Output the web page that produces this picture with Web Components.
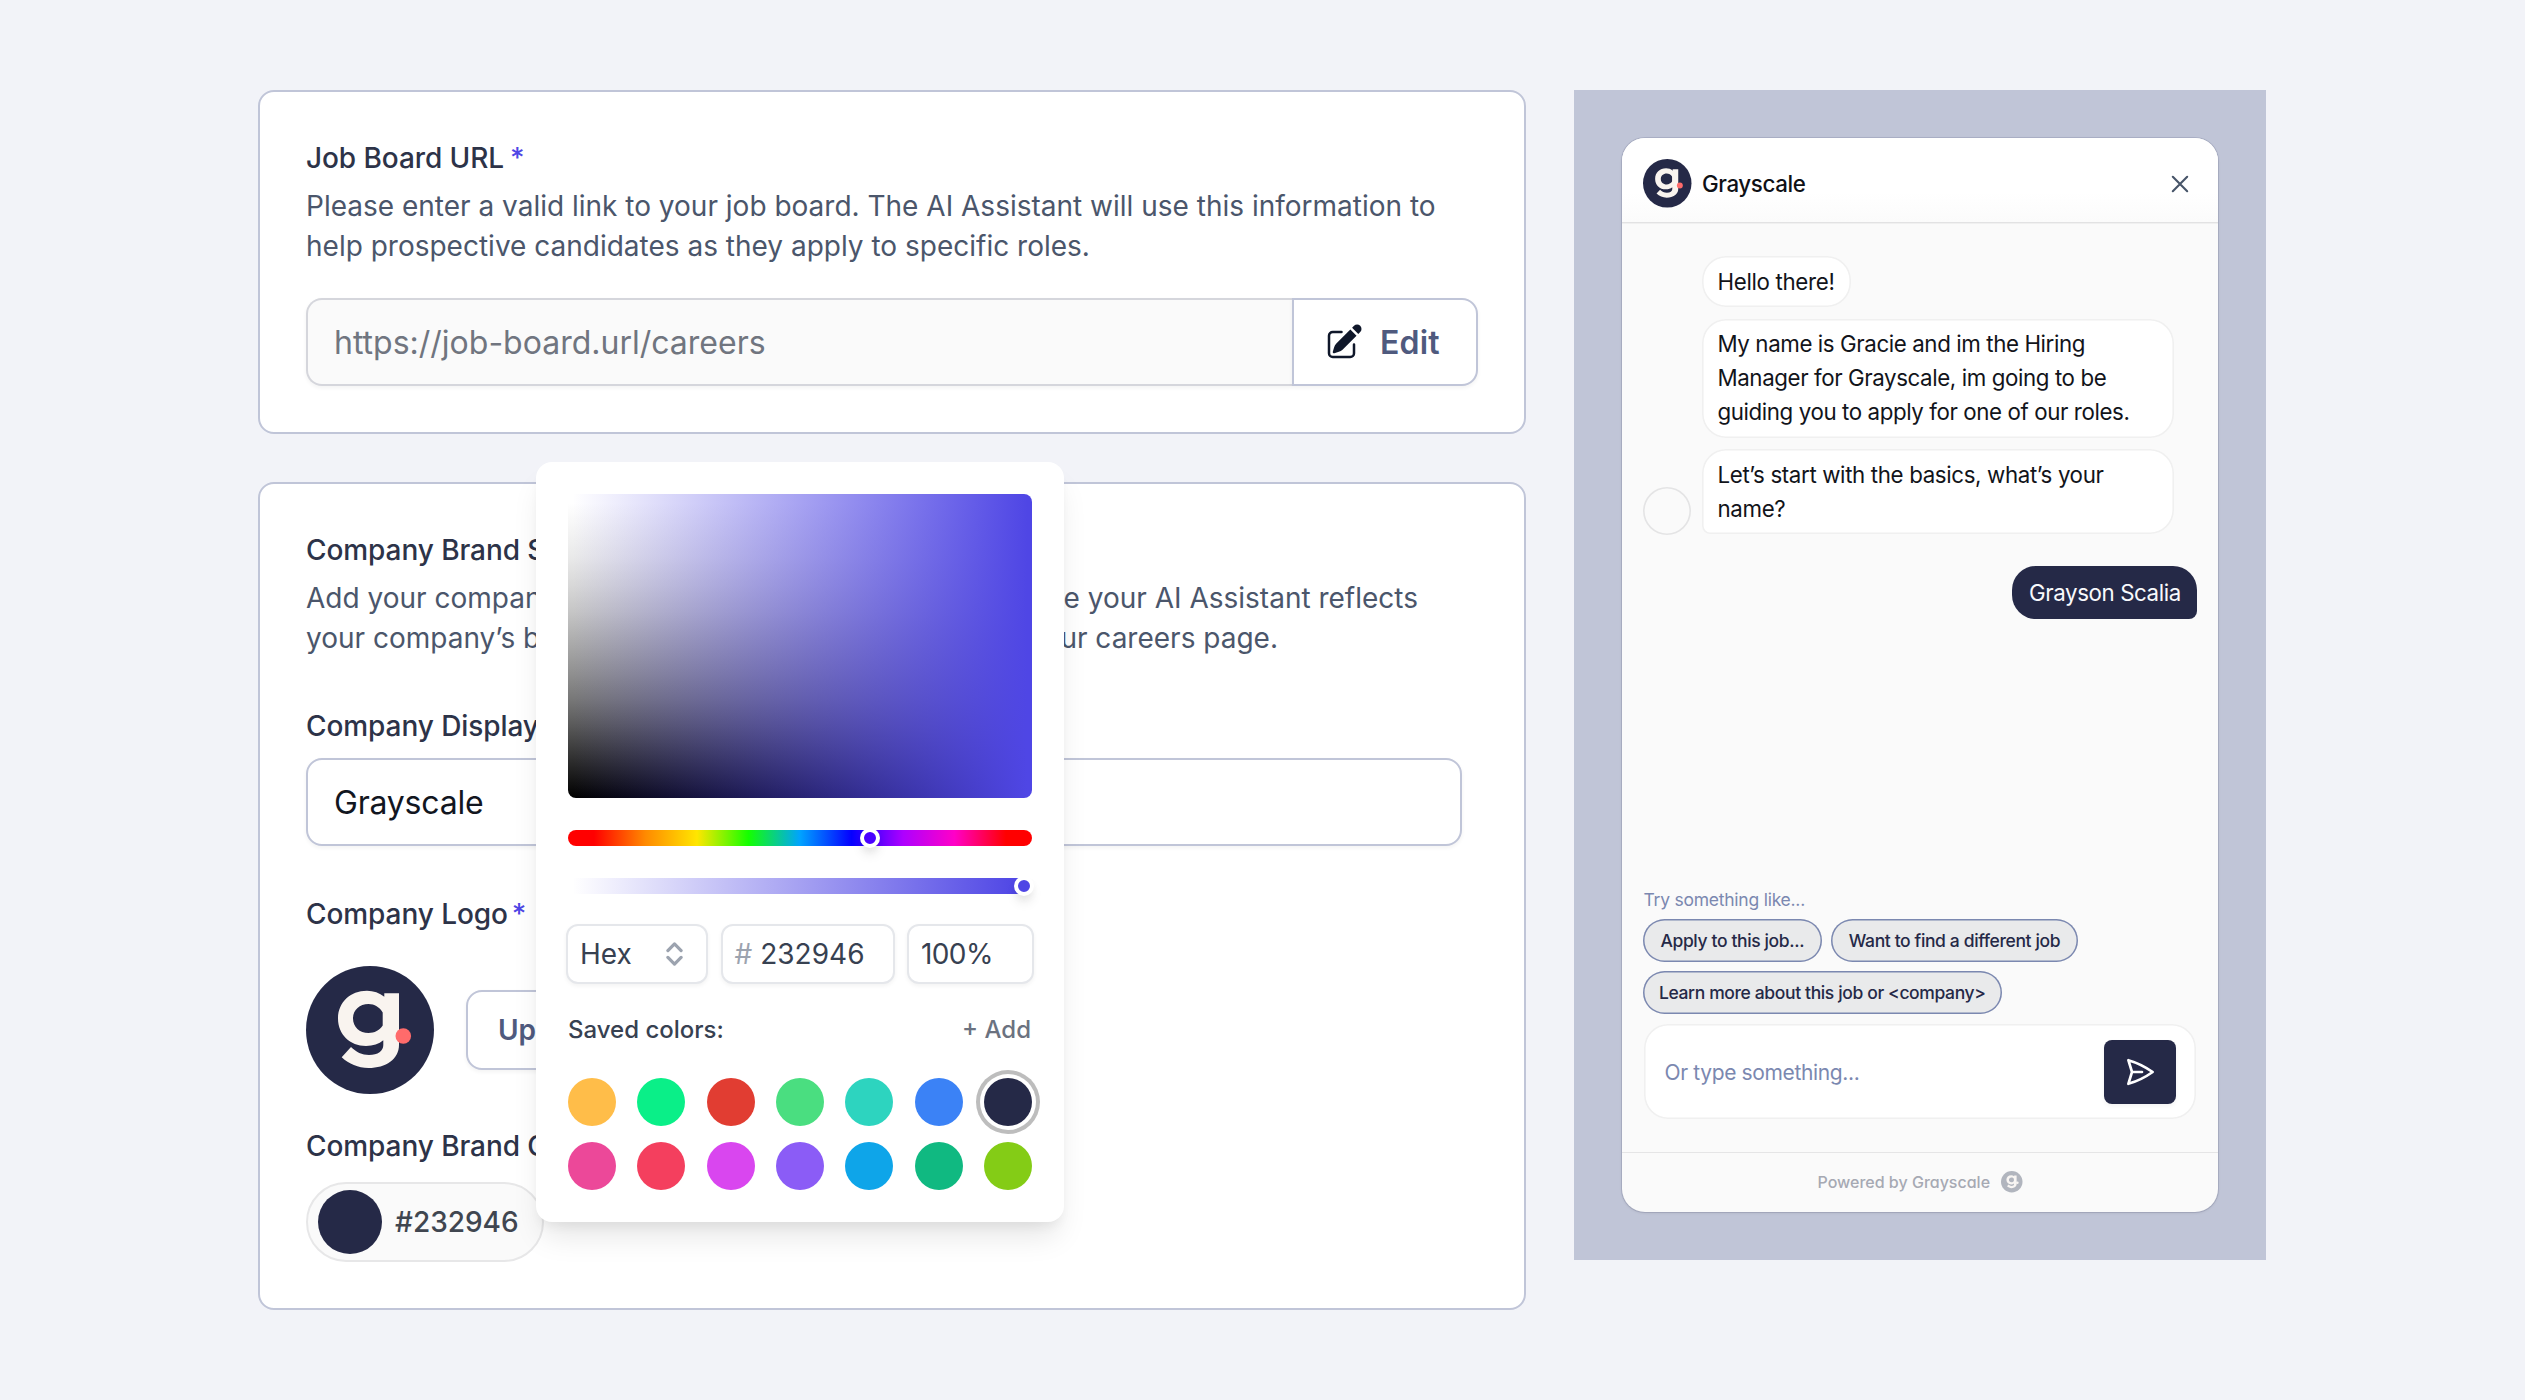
<!DOCTYPE html>
<html lang="en">
<head>
<meta charset="utf-8">
<title>Grayscale AI Assistant settings</title>
<style>
html,body{margin:0;height:100%}
body{background:#f2f3f8;font-family:Inter,"Liberation Sans",sans-serif;overflow:hidden}
</style>
</head>
<body>
<settings-page></settings-page>
<script>
const define = (name, css, html, setup) => {
  const tpl = document.createElement('template');
  tpl.innerHTML = `<style>:host,*{box-sizing:border-box}${css}</style>${html}`;
  customElements.define(name, class extends HTMLElement {
    connectedCallback() {
      if (this.shadowRoot) return;
      const root = this.attachShadow({ mode: 'open' });
      root.append(tpl.content.cloneNode(true));
      if (setup) setup(this, root);
    }
  });
};

/* Brand mark: set size with --size, colours with --disc / --mark / --dot */
define('brand-logo', `
:host{display:block;flex:none;width:var(--size,128px);height:var(--size,128px)}
svg{display:block;width:100%;height:100%}`, `
<svg viewBox="0 0 128 128">
<circle cx="64" cy="64" r="64" style="fill:var(--disc,#252947)"/>
<path fill-rule="evenodd" style="fill:var(--mark,#f9f4ef)" d="M93 27.3V79C93 93 80 102 62.5 102C52 102 43 98 35.7 91.3L45 81C50 86 56 89 63 89C72 89 77.3 85 77.3 79V74.3C73 78 67 80 60 80C44 80 32 68.5 32 52.5C32 36.5 44 24.7 61 24.7C67.5 24.7 73.5 26.7 78.3 30.7V27.3ZM76.7 46.5C73.5 41 68.5 38 62.5 38C53.5 38 47 44 47 52.5C47 61 53.5 67 62.5 67C68.5 67 73.5 64.3 76.7 59.5Z"/>
<circle cx="97.3" cy="70" r="7.8" style="fill:var(--dot,#ff6b6b)"/>
</svg>`);

define('field-label', `
:host{display:block;font-size:28px;line-height:40px;font-weight:500;color:#2d3348;letter-spacing:-.08px;white-space:nowrap}
span{color:#4f46e5;margin-left:var(--star-gap,4px)}`,
`<slot></slot>`, (el, root) => {
  if (el.hasAttribute('required')) {
    const s = document.createElement('span');
    s.textContent = '*';
    root.append(s);
  }
});

define('settings-card', `
:host{display:flex;flex-direction:column;position:relative;background:#fff;border:2px solid #c0c5d8;border-radius:16px;padding:46px}`,
`<slot></slot>`);

define('help-text', `
:host{display:block;margin-top:8px;font-size:28px;line-height:40px;color:#4b566b;white-space:nowrap}`,
`<slot></slot>`);

define('text-box', `
:host{display:flex;align-items:center;height:88px;padding:1px 26px 0;border:2px solid #c0c5d8;border-radius:16px;background:#fff;font-size:32px;line-height:40px;color:#12161f;box-shadow:0 2px 4px rgba(0,0,0,.05)}
:host([disabled]){background:#fafafa;border-color:#d5d6dc;border-right:0;border-radius:16px 0 0 16px;color:#70757f;flex:1}`,
`<slot></slot>`);

define('outline-button', `
:host{display:flex;align-items:center;gap:16px;height:80px;padding:0 30px;border:2px solid #c0c5d8;border-radius:16px;background:#fff;font-size:28px;font-weight:600;color:#4f5a7e;box-shadow:0 2px 4px rgba(0,0,0,.05)}
:host([joined]){height:88px;width:186px;border-radius:0 16px 16px 0;font-size:32px;letter-spacing:.2px}`,
`<slot name="icon"></slot><slot></slot>`);

define('color-pill', `
:host{display:flex;align-items:center;gap:13px;width:238px;height:80px;padding:0 10px;border:2px solid #e7e7e8;border-radius:40px;background:#fafafa;font-size:28px;font-weight:500;color:#404650}
i{width:64px;height:64px;border-radius:50%;background:#252947}`,
`<i></i><slot></slot>`);

define('color-slider', `
:host{display:block;position:relative;height:16px;border-radius:8px;flex:none}
:host([kind=hue]){background:linear-gradient(90deg,#f00 5.6%,#ff8a00 16.7%,#ffe600 27.8%,#14ff00 38.9%,#00a3ff 50%,#0500ff 61.1%,#ad00ff 72.2%,#ff00c7 83.3%,#f00 94.4%)}
:host([kind=alpha]){background:linear-gradient(90deg,rgba(79,70,229,0) 1%,#4f46e5 97%)}
i{position:absolute;top:-2px;left:var(--at);width:20px;height:20px;border-radius:50%;border:4px solid #fff;background:var(--knob);box-shadow:0 8px 12px -2px rgba(0,0,0,.1),0 4px 8px -2px rgba(0,0,0,.06)}`,
`<i></i>`);

define('mini-field', `
:host{display:flex;align-items:center;height:60px;border:2px solid #e5e7eb;border-radius:12px;background:#fff;padding:0 12px;font-size:28px;color:#374151;box-shadow:0 2px 4px rgba(0,0,0,.05)}
svg{display:block;margin-left:auto;margin-right:11px}`,
`<slot></slot>`, (el, root) => {
  if (el.hasAttribute('select')) root.innerHTML += `<svg width="17" height="24" viewBox="0 0 17 24" fill="none" stroke="#9ca3af" stroke-width="3.2" stroke-linecap="round" stroke-linejoin="round"><path d="M1.9 8.6L8.5 1.9L15.1 8.6M1.9 15.4L8.5 22.1L15.1 15.4"/></svg>`;
});

define('color-swatch', `
:host{display:block;width:48px;height:48px;border-radius:50%;background:var(--c)}
:host([selected]){box-shadow:0 0 0 4px #fff,0 0 0 8px #bdbdbd}`, ``);

define('color-picker', `
:host{position:absolute;left:276px;top:-22px;width:528px;height:760px;padding:32px;display:flex;flex-direction:column;background:#fff;border-radius:16px;box-shadow:0 20px 30px -6px rgba(0,0,0,.1),0 8px 12px -4px rgba(0,0,0,.06)}
.area{height:304px;border-radius:8px;margin-bottom:32px;background:
linear-gradient(90deg,rgba(79,70,229,0) 1%,#4f46e5 99%),
linear-gradient(180deg,#fff 3%,#e9e9e9 21%,#d8d8d8 30%,#c5c5c5 39%,#a8a8a8 50%,#909090 59%,#767676 68%,#5a5a5a 76%,#383838 85%,#161616 94%,#000 100%)}
.fields{display:flex;justify-content:space-between;margin:30px -2px 0}
.head{display:flex;justify-content:space-between;margin-top:30px;font-size:24px;line-height:32px;font-weight:500;color:#374151}
.add{color:#6b7280;padding-right:1px}
.hash{color:#9ca3af;margin-right:8px}
.grid{display:grid;grid-template-columns:repeat(7,48px);justify-content:space-between;row-gap:16px;margin-top:32px}`, `
<div class="area"></div>
<color-slider kind="hue" style="--at:292px;--knob:#4a00ff;margin-bottom:32px"></color-slider>
<color-slider kind="alpha" style="--at:446px;--knob:#4f46e5"></color-slider>
<div class="fields">
<mini-field select style="width:142px">Hex</mini-field>
<mini-field style="width:174px"><span class="hash">#</span><span>232946</span></mini-field>
<mini-field style="width:127px;letter-spacing:-.6px">100%</mini-field>
</div>
<div class="head"><span>Saved colors:</span><span class="add">+ Add</span></div>
<div class="grid"></div>`, (el, root) => {
  const g = root.querySelector('.grid');
  ['#ffbd49','#0aef88','#e13d32','#4ade80','#2dd4bf','#3b82f6','#252947','#ec4899','#f43f5e','#d946ef','#8b5cf6','#0ea5e9','#10b981','#84cc16'].forEach((c, i) => {
    const s = document.createElement('color-swatch');
    s.style.setProperty('--c', c);
    if (i === 6) s.setAttribute('selected', '');
    g.append(s);
  });
});

define('chat-bubble', `
:host{display:block;width:var(--w,472.5px);padding:8.5px 16px;border-radius:24px;background:#fff;box-shadow:inset 0 0 0 1.6px #f0f0f0;font-size:22.3px;line-height:34px;letter-spacing:-.4px;color:#12141a;white-space:nowrap}
:host([last]){border-bottom-left-radius:8px;letter-spacing:-.36px}
:host([mine]){align-self:flex-end;padding:10px 17px 8.6px;background:#252947;color:#f8f9fc;box-shadow:none;border-bottom-right-radius:8px}`,
`<slot></slot>`);

define('suggestion-chip', `
:host{display:flex;align-items:center;justify-content:center;height:43.3px;width:var(--w);border-radius:22px;background:#e9eaeb;box-shadow:inset 0 0 0 1.5px #7b88b0;font-size:17.5px;font-weight:500;letter-spacing:-.37px;color:#252947;white-space:nowrap}`,
`<slot></slot>`);

define('chat-widget', `
:host{display:flex;flex-direction:column;height:1074px;border-radius:23px;overflow:hidden;background:#fafafa;box-shadow:0 0 0 1px rgba(70,75,110,.16),0 1px 3px rgba(0,0,0,.1)}
header{display:flex;align-items:center;height:85px;padding:7px 29px 0 21px;background:linear-gradient(#fff 65%,#fbfbfb);border-bottom:1.6px solid #e2e2e3;box-shadow:0 1px 0 #f0f0f0}
header span{flex:1;margin-left:10.5px;font-size:22.3px;font-weight:500;letter-spacing:-.38px;color:#0f1116}
.log{flex:1;display:flex;flex-direction:column;padding:33px 21.5px 0 21px}
.turn{display:flex;align-items:flex-end;gap:10.5px}
.turn i{width:48px;height:48px;margin-bottom:-.5px;border-radius:50%;box-shadow:inset 0 0 0 1.6px #e4e4e5}
.stack{display:flex;flex-direction:column;gap:11.6px}
.compose{padding:0 22px 33px 20.5px;display:flex;flex-direction:column}
.hint{font-size:17.5px;line-height:24px;letter-spacing:-.24px;color:#7b88b0;padding-left:1px;margin-bottom:7px}
.chips{display:flex;flex-wrap:wrap;gap:8.7px 9px;margin-bottom:10px}
.box{display:flex;align-items:center;justify-content:space-between;height:95px;margin-left:1px;padding:0 20.5px 0 21px;border-radius:24px;background:#fff;box-shadow:inset 0 0 0 1.6px #f0f0f0;font-size:21px;letter-spacing:-.36px;color:#7b88b0}
.box span{padding-top:1.5px}
.send{display:flex;align-items:center;justify-content:center;width:72px;height:64px;border-radius:8px;background:#252947;box-shadow:0 2px 4px rgba(0,0,0,.05)}
footer{display:flex;align-items:center;justify-content:center;gap:11px;height:60px;border-top:1px solid #e5e5e6;font-size:16px;font-weight:500;font-feature-settings:"cv11";color:#a6a9b3;padding-bottom:1px}
`, `
<header><brand-logo style="--size:48.5px"></brand-logo><span>Grayscale</span>
<svg width="18" height="18" viewBox="0 0 18 18" fill="none" stroke="#475569" stroke-width="2.1" stroke-linecap="round"><path d="M1.8 1.8L16.2 16.2M16.2 1.8L1.8 16.2"/></svg></header>
<div class="log">
<div class="turn"><i></i><div class="stack">
<chat-bubble style="--w:149px;letter-spacing:-.33px">Hello there!</chat-bubble>
<chat-bubble>My name is Gracie and im the Hiring<br>Manager for Grayscale, im going to be<br>guiding you to apply for one of our roles.</chat-bubble>
<chat-bubble last>Let’s start with the basics, what’s your<br>name?</chat-bubble>
</div></div>
<chat-bubble mine style="--w:184.5px;margin-top:32px">Grayson Scalia</chat-bubble>
</div>
<div class="compose">
<div class="hint">Try something like...</div>
<div class="chips">
<suggestion-chip style="--w:179.5px">Apply to this job...</suggestion-chip>
<suggestion-chip style="--w:247px">Want to find a different job</suggestion-chip>
<suggestion-chip style="--w:359.5px">Learn more about this job or &lt;company&gt;</suggestion-chip>
</div>
<div class="box"><span>Or type something...</span><div class="send"><svg width="32" height="32" viewBox="0 0 24 24" fill="none" stroke="#fff" stroke-width="2" stroke-linecap="round" stroke-linejoin="round"><path d="M6 12L3.269 3.126A59.768 59.768 0 0121.485 12 59.77 59.77 0 013.27 20.876L5.999 12zm0 0h7.5"/></svg></div></div>
</div>
<footer><span>Powered by Grayscale</span><brand-logo style="--size:21.5px;--disc:#b1b5be;--mark:#f8f5f3;--dot:#f8f5f3"></brand-logo></footer>`);

define('settings-page', `
:host{display:flex;align-items:flex-start;gap:48px;padding:90px 0 0 258px;width:100%;height:1400px}
.forms{display:flex;flex-direction:column;gap:48px;width:1268px}
.preview{width:692px;height:1170px;padding:48px;background:#c0c5d7}
.join{display:flex;margin-top:32px}
.logo{display:flex;align-items:center;gap:32px;margin:32px 0}
.line{display:flex;justify-content:space-between}`, `
<div class="forms">
<settings-card>
<field-label required style="--star-gap:6px">Job Board URL</field-label>
<help-text>Please enter a valid link to your job board. The AI Assistant will use this information to<br>help prospective candidates as they apply to specific roles.</help-text>
<div class="join"><text-box disabled>https://job-board.url/careers</text-box>
<outline-button joined><svg slot="icon" width="40" height="40" viewBox="0 0 24 24" fill="#0f172a"><path d="M21.731 2.269a2.625 2.625 0 00-3.712 0l-1.157 1.157 3.712 3.712 1.157-1.157a2.625 2.625 0 000-3.712zM19.513 8.199l-3.712-3.712-8.4 8.4a5.25 5.25 0 00-1.32 2.214l-.8 2.685a.75.75 0 00.933.933l2.685-.8a5.25 5.25 0 002.214-1.32l8.4-8.4z"/><path d="M5.25 5.25a3 3 0 00-3 3v10.5a3 3 0 003 3h10.5a3 3 0 003-3V13.5a.75.75 0 00-1.5 0v5.25a1.5 1.5 0 01-1.5 1.5H5.25a1.5 1.5 0 01-1.5-1.5V8.25a1.5 1.5 0 011.5-1.5h5.25a.75.75 0 000-1.5H5.25z"/></svg>Edit</outline-button></div>
</settings-card>
<settings-card>
<field-label>Company Brand Settings</field-label>
<help-text><div class="line" style="width:1112px"><span>Add your company name, logo and color to</span><span>make sure your AI Assistant reflects</span></div><div class="line" style="width:972px"><span>your company’s branding and the style of</span><span>your careers page.</span></div></help-text>
<field-label style="margin-top:48px">Company Display Name</field-label>
<text-box style="margin-top:12px;width:1156px;letter-spacing:-.2px">Grayscale</text-box>
<field-label required style="margin-top:48px;--star-gap:4px">Company Logo</field-label>
<div class="logo"><brand-logo></brand-logo><outline-button style="width:160px">Up</outline-button></div>
<field-label>Company Brand Color</field-label>
<color-pill style="margin-top:16px">#232946</color-pill>
<color-picker></color-picker>
</settings-card>
</div>
<div class="preview"><chat-widget></chat-widget></div>`);
</script>
</body>
</html>
